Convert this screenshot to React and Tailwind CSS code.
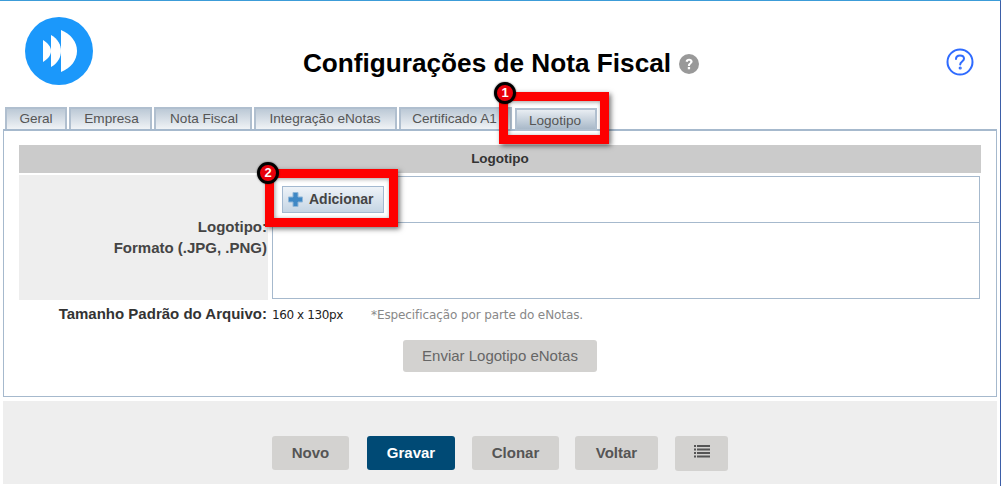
import React from 'react';

const sans = 'font-["Liberation_Sans",Arial,sans-serif]';

const tabs = [
  { label: 'Geral', width: 'w-[62px]' },
  { label: 'Empresa', width: 'w-[83px]', pad: 'pl-[2px]' },
  { label: 'Nota Fiscal', width: 'w-[98px]', pad: 'pl-[2px]' },
  { label: 'Integração eNotas', width: 'w-[143px]', pad: 'pr-[1px]' },
  { label: 'Certificado A1', width: 'w-[113px]', pad: 'pr-[2px]' },
];

function Logo() {
  return (
    <svg width="68" height="68" viewBox="0 0 68 68">
      <circle cx="34" cy="34" r="34" fill="#1b98fb" />
      <path d="M18 23 C23 26 26 30 26 34 C26 38 23 42 18 45 Z" fill="#fff" />
      <path d="M26 18 C33 22 36 28 36 34 C36 40 33 46 26 50 Z" fill="#fff" />
      <path d="M36 13 C46 17 52 25 52 34 C52 43 46 51 36 55 Z" fill="#fff" />
    </svg>
  );
}

function GrayHelp() {
  return (
    <svg width="20" height="20" viewBox="0 0 20 20">
      <circle cx="10" cy="10" r="10" fill="#999" />
      <path d="M6.6 7.6 C6.8 5.6 8.2 4.7 10.1 4.7 C12.1 4.7 13.6 5.9 13.6 7.6 C13.6 9.9 11 9.9 11 12 L8.9 12 C8.9 9 11.3 9 11.3 7.7 C11.3 7 10.8 6.7 10.1 6.7 C9.3 6.7 8.9 7.2 8.7 8 Z" fill="#fff" />
      <rect x="8.8" y="13" width="2.3" height="2.3" fill="#fff" />
    </svg>
  );
}

function BlueHelp() {
  return (
    <svg width="28" height="28" viewBox="0 0 28 28" fill="none" stroke="#2f6bff" strokeWidth="2" strokeLinecap="round">
      <circle cx="14" cy="14" r="12.5" />
      <path d="M10 11 C10 8.6 12 7.5 14 7.5 C16.2 7.5 18 8.8 18 10.8 C18 13.4 14.2 13.6 14.2 16.4" />
      <circle cx="14.2" cy="20" r="0.6" fill="#2f6bff" />
    </svg>
  );
}

function Tab({ label, width, pad = '' }) {
  return (
    <div className={`${width} ${pad} h-[22px] border-2 border-b-0 border-[#b0bfcf] bg-gradient-to-b from-[#bcc9d6] to-[#f0f3f6] flex items-center justify-center text-[13.6px] text-[#555]`}>
      {label}
    </div>
  );
}

function Badge({ n, className }) {
  return (
    <div className={`absolute w-[22px] h-[22px] rounded-full bg-[#e8000b] border-[3px] border-black text-white text-[13px] font-bold flex items-center justify-center shadow-[0_0_2px_rgba(0,0,0,0.6)] ${className}`}>
      {n}
    </div>
  );
}

function FooterButton({ children, dark, width }) {
  return (
    <button className={`${width} h-[34px] rounded-[3px] text-[15px] font-bold flex items-center justify-center ${dark ? 'bg-[#004a75] text-white' : 'bg-[#d3d2d0] text-[#555]'}`}>
      {children}
    </button>
  );
}

export default function App() {
  return (
    <div className={`${sans} relative w-[1001px] h-[486px] overflow-hidden bg-white border-t border-t-[#3c9cd8] border-r border-r-[#3d5fa8]`}>
      {/* cabecalho */}
      <div className="h-[106px] flex pl-[25px] pr-[26px] relative">
        <div className="pt-[16px]"><Logo /></div>
        <div className="flex-1 flex items-start justify-center pt-[47px] pr-[37px] gap-[8px]">
          <h1 className="text-[26.2px] leading-[30px] font-bold text-black">Configurações de Nota Fiscal</h1>
          <div className="pt-[6px]"><GrayHelp /></div>
        </div>
        <div className="pt-[47px]"><BlueHelp /></div>
      </div>

      {/* abas */}
      <div className="flex pl-[5px] gap-[2px] h-[22px]">
        {tabs.map((t) => <Tab key={t.label} label={t.label} width={t.width} pad={t.pad} />)}
        <div className="ml-[1px] w-[82px] h-[23px] mt-[1px] pt-[4px] pr-[2px] border-2 border-[#b0bfcf] bg-gradient-to-b from-[#e8edf2] to-[#a9b9c9] flex items-center justify-center text-[13.6px] text-[#555]">
          Logotipo
        </div>
      </div>

      {/* painel */}
      <div className="ml-[3px] w-[994px] h-[268px] border border-[#a6b9cd] border-t-2 px-[15px] pt-[14px]">
        <div className="h-[28px] bg-[#cbcbcb] flex items-center justify-center text-[13.5px] font-bold text-[#333]">Logotipo</div>
        <div className="flex mt-[2px] h-[125px]">
          <div className="w-[249px] pr-[1px] bg-[#eeeeee] flex flex-col items-end pt-[41px] text-[15px] leading-[21px] font-bold text-[#444]">
            <span>Logotipo:</span>
            <span>Formato (.JPG, .PNG)</span>
          </div>
          <div className="ml-[4px] mr-[1px] mt-[1px] flex-1 border border-[#a6b9cd] h-[123px]">
            <div className="h-[46px] border-b border-[#a6b9cd] pl-[9px] pt-[9px]">
              <button className="w-[102px] h-[27px] border border-[#a3b9d0] bg-gradient-to-b from-[#eef3f8] to-[#c5d5e4] flex items-center pl-[4px] gap-[5px] text-[14px] font-bold text-[#444]">
                <svg width="17" height="17" viewBox="0 0 17 17">
                  <path d="M6 1.5 H11 V6 H15.5 V11 H11 V15.5 H6 V11 H1.5 V6 H6 Z" fill="#3f88c5" stroke="#8fb6d8" strokeWidth="1" />
                </svg>
                Adicionar
              </button>
            </div>
          </div>
        </div>
        <div className="flex items-center h-[27px] mt-[1px]">
          <span className="w-[248px] text-right text-[15px] font-bold text-[#333]">Tamanho Padrão do Arquivo:</span>
          <span className='ml-[5px] w-[99px] text-[12px] text-[#222] font-["DejaVu_Sans",sans-serif] tracking-[-0.4px]'>160 x 130px</span>
          <span className='text-[12px] text-[#888] font-["DejaVu_Sans",sans-serif] tracking-[-0.1px]'>*Especificação por parte do eNotas.</span>
        </div>
        <div className="flex justify-center mt-[12px]">
          <button className="w-[194px] h-[32px] rounded-[3px] bg-[#d3d2d0] text-[15px] text-[#666]">Enviar Logotipo eNotas</button>
        </div>
      </div>

      {/* rodape */}
      <div className="ml-[3px] mt-[4px] w-[994px] h-[83px] bg-[#eeeeee] flex items-start pl-[269px] pt-[35px]">
        <FooterButton width="w-[77px]">Novo</FooterButton>
        <div className="w-[18px]" />
        <FooterButton width="w-[88px]" dark>Gravar</FooterButton>
        <div className="w-[17px]" />
        <FooterButton width="w-[87px]">Clonar</FooterButton>
        <div className="w-[16px]" />
        <FooterButton width="w-[83px]">Voltar</FooterButton>
        <div className="w-[17px]" />
        <button className="w-[53px] h-[35px] rounded-[3px] bg-[#d3d2d0] flex justify-center pt-[9px]">
          <svg width="16" height="13" viewBox="0 0 16 13" fill="#555">
            <rect x="0" y="0" width="2" height="2" /><rect x="3" y="0" width="13" height="2" />
            <rect x="0" y="3.5" width="2" height="2" /><rect x="3" y="3.5" width="13" height="2" />
            <rect x="0" y="7" width="2" height="2" /><rect x="3" y="7" width="13" height="2" />
            <rect x="0" y="10.5" width="2" height="2" /><rect x="3" y="10.5" width="13" height="2" />
          </svg>
        </button>
      </div>

      {/* marcacoes vermelhas do tutorial */}
      <div className="absolute left-[499px] top-[91px] w-[110px] h-[52px] border-[9px] border-[#fe0000] shadow-[2px_2px_5px_rgba(0,0,0,0.55),inset_1px_1px_4px_rgba(0,0,0,0.4)]" />
      <Badge n="1" className="left-[494px] top-[81px]" />
      <div className="absolute left-[265px] top-[168px] w-[133px] h-[58px] border-[9px] border-[#fe0000] shadow-[2px_2px_5px_rgba(0,0,0,0.55),inset_1px_1px_4px_rgba(0,0,0,0.4)]" />
      <Badge n="2" className="left-[257px] top-[161px]" />
    </div>
  );
}
